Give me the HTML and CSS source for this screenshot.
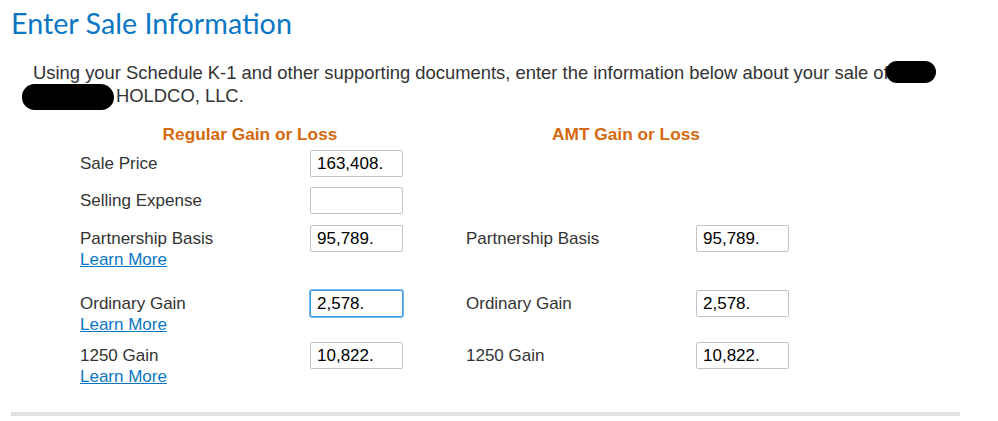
FILE: index.html
```html
<!DOCTYPE html>
<html>
<head>
    <title>Enter Sale Information</title>
    <link rel="stylesheet" href="styles.css">
</head>
<body>
    <div class="page">
        <h1 class="title">Enter Sale Information</h1>

        <p class="intro">
            Using your Schedule K-1 and other supporting documents, enter the information below about your sale of<span class="redact redact-a"></span><br>
            <span class="redact redact-b"></span>HOLDCO, LLC.
        </p>

        <div class="headings">
            <div class="heading heading-regular">Regular Gain or Loss</div>
            <div class="heading heading-amt">AMT Gain or Loss</div>
        </div>

        <div class="rows">
            <div class="row">
                <div class="label">Sale Price</div>
                <div class="field"><input type="text" value="163,408."></div>
            </div>

            <div class="row gap-10">
                <div class="label">Selling Expense</div>
                <div class="field"><input type="text" value=""></div>
            </div>

            <div class="row gap-11">
                <div class="label">Partnership Basis<br><a href="#">Learn More</a></div>
                <div class="field"><input type="text" value="95,789."></div>
                <div class="label">Partnership Basis</div>
                <div class="field"><input type="text" value="95,789."></div>
            </div>

            <div class="row gap-20">
                <div class="label">Ordinary Gain<br><a href="#">Learn More</a></div>
                <div class="field"><input type="text" class="active" value="2,578."></div>
                <div class="label">Ordinary Gain</div>
                <div class="field"><input type="text" value="2,578."></div>
            </div>

            <div class="row gap-7">
                <div class="label">1250 Gain<br><a href="#">Learn More</a></div>
                <div class="field"><input type="text" value="10,822."></div>
                <div class="label">1250 Gain</div>
                <div class="field"><input type="text" value="10,822."></div>
            </div>
        </div>

        <div class="rule"></div>
    </div>
</body>
</html>
```

FILE: styles.css
```css
body {
    margin: 0;
    font-family: "Liberation Sans", Arial, sans-serif;
    color: #333;
    background: #fff;
}
.page {
    padding: 0 0 0 11px;
    width: 949px;
}
.title {
    margin: 0;
    padding-top: 4px;
    font-family: Lato, "Open Sans", sans-serif;
    font-weight: 400;
    font-size: 28.7px;
    line-height: 38px;
    color: #0a77c4;
}
.intro {
    margin: 19px 0 0 0;
    padding-left: 22px;
    font-size: 18.4px;
    line-height: 22px;
    color: #333;
}
.redact {
    display: inline-block;
    background: #000;
    position: relative;
}
.redact-a {
    width: 50px;
    height: 22px;
    border-radius: 11px;
    margin-left: -3px;
    vertical-align: -4px;
}
.redact-b {
    width: 92px;
    height: 26px;
    border-radius: 13px 14px 13px 13px;
    margin-left: -11px;
    margin-right: 2px;
    vertical-align: -8px;
}
.headings {
    display: flex;
    margin-top: 14px;
    padding-left: 69px;
}
.heading {
    font-weight: bold;
    font-size: 17.3px;
    line-height: 20px;
    color: #d4690e;
    text-align: center;
}
.heading-regular {
    width: 340px;
}
.heading-amt {
    width: 320px;
    margin-left: 46px;
}
.rows {
    margin-top: 6px;
    padding-left: 69px;
}
.row {
    display: grid;
    grid-template-columns: 230px 156px 230px 93px;
    align-items: start;
}
.gap-7 { margin-top: 7px; }
.gap-10 { margin-top: 10px; }
.gap-11 { margin-top: 11px; }
.gap-20 { margin-top: 20px; }
.label {
    padding-top: 3px;
    font-size: 17px;
    line-height: 21px;
    color: #333;
}
.label a {
    color: #0a77c4;
    text-decoration: underline;
}
.field input {
    box-sizing: border-box;
    width: 93px;
    height: 27px;
    margin: 0;
    padding: 0 6px;
    border: 1px solid #c4c4c4;
    border-radius: 2px;
    font-family: "Liberation Sans", Arial, sans-serif;
    font-size: 17px;
    color: #000;
    background: #fff;
    outline: none;
}
.field input.active {
    border: 1px solid #3a9be0;
    box-shadow: 0 0 0 1px #7cbcec;
}
.rule {
    margin-top: 25px;
    height: 4px;
    background: #e0e0e0;
}
```
